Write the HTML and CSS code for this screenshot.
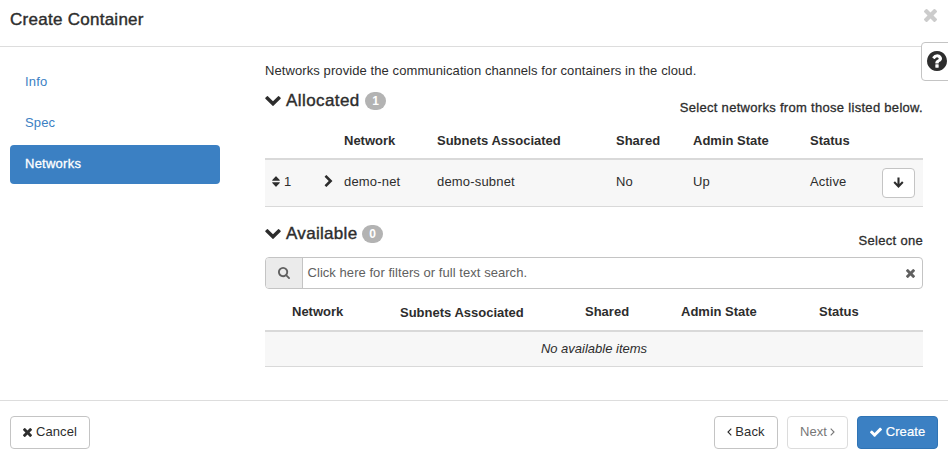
FILE: index.html
```html
<!DOCTYPE html>
<html lang="en">
<head>
<meta charset="utf-8">
<title>Create Container</title>
<link rel="stylesheet" href="styles.css">
</head>
<body>
<svg class="sprite" aria-hidden="true">
  <symbol id="times" viewBox="302 366 1188 1188"><path d="M1490 1322q0 40-28 68l-136 136q-28 28-68 28t-68-28l-294-294-294 294q-28 28-68 28t-68-28l-136-136q-28-28-28-68t28-68l294-294-294-294q-28-28-28-68t28-68l136-136q28-28 68-28t68 28l294 294 294-294q28-28 68-28t68 28l136 136q28 28 28 68t-28 68l-294 294 294 294q28 28 28 68z"/></symbol>
  <symbol id="check" viewBox="121 270 1550 1252"><path d="M1671 566q0 40-28 68l-724 724-136 136q-28 28-68 28t-68-28l-136-136-362-362q-28-28-28-68t28-68l136-136q28-28 68-28t68 28l294 295 656-657q28-28 68-28t68 28l136 136q28 28 28 68z"/></symbol>
  <symbol id="search" viewBox="64 128 1664 1664"><path d="M1216 832q0-185-131.500-316.500t-316.500-131.500-316.500 131.500-131.500 316.500 131.500 316.500 316.500 131.500 316.500-131.500 131.500-316.500zm512 832q0 52-38 90t-90 38q-54 0-90-38l-343-342q-179 124-399 124-143 0-273.500-55.500t-225-150-150-225-55.500-273.500 55.500-273.500 150-225 225-150 273.500-55.500 273.500 55.500 225 150 150 225 55.500 273.500q0 220-124 399l343 343q37 37 37 90z"/></symbol>
  <symbol id="question" viewBox="128 128 1536 1536"><path d="M1024 1376v-192q0-14-9-23t-23-9h-192q-14 0-23 9t-9 23v192q0 14 9 23t23 9h192q14 0 23-9t9-23zm256-672q0-88-55.500-163t-138.500-116-170-41q-243 0-371 213-15 24 8 42l132 100q7 6 19 6 16 0 25-12 53-68 86-92 34-24 86-24 48 0 85.500 26t37.500 59q0 38-20 61t-68 45q-63 28-115.500 86.500t-52.500 125.500v36q0 14 9 23t23 9h192q14 0 23-9t9-23q0-19 21.500-49.500t54.500-49.500q32-18 49-28.500t46-35 44.500-48 28-60.500 12.500-81zm384 192q0 209-103 385.500t-279.500 279.500-385.500 103-385.500-103-279.500-279.500-103-385.500 103-385.500 279.500-279.500 385.500-103 385.500 103 279.500 279.500 103 385.500z"/></symbol>
  <symbol id="down" viewBox="90 533 1612 1035"><path d="M1683 808l-742 741q-19 19-45 19t-45-19l-742-741q-19-19-19-45.500t19-45.500l166-165q19-19 45-19t45 19l531 531 531-531q19-19 45-19t45 19l166 165q19 19 19 45.500t-19 45.500z"/></symbol>
  <symbol id="right" viewBox="346 26 1036 1612"><path d="M1363 877l-742 742q-19 19-45 19t-45-19l-166-166q-19-19-19-45t19-45l531-531-531-531q-19-19-19-45t19-45l166-166q19-19 45-19t45 19l742 742q19 19 19 45t-19 45z"/></symbol>
  <symbol id="sort" viewBox="0 0 8 11"><path d="M.6 4.700Q-.2 4.500.3 3.900L3.600.4Q4 0 4.400.4L7.700 3.900Q8.200 4.500 7.400 4.700ZM.6 6.300Q-.2 6.500.3 7.100L3.600 10.600Q4 11 4.400 10.600L7.700 7.100Q8.200 6.500 7.400 6.300Z"/></symbol>
  <symbol id="arrow" viewBox="0 0 11 11"><path d="M5.500.5V9M1.200 5.100 5.500 9.400 9.800 5.100" fill="none" stroke="currentColor" stroke-width="2.100"/></symbol>
  <symbol id="angle-left" viewBox="0 0 5 8"><path d="M4.300.7 1 4 4.300 7.300" fill="none" stroke="currentColor" stroke-width="1.100"/></symbol>
  <symbol id="angle-right" viewBox="0 0 5 8"><path d="M.7.7 4 4 .7 7.300" fill="none" stroke="currentColor" stroke-width="1.100"/></symbol>
</svg>
<div class="modal">
  <header class="modal-header">
    <h1 class="title">Create Container</h1>
    <svg class="close"><use href="#times"/></svg>
  </header>
  <div class="modal-body">
    <nav class="steps">
      <a class="step">Info</a>
      <a class="step">Spec</a>
      <a class="step active">Networks</a>
    </nav>
    <main class="content">
      <p class="intro">Networks provide the communication channels for containers in the cloud.</p>
      <section class="allocated">
        <div class="section-head">
          <h2 class="section-title"><svg class="chevron"><use href="#down"/></svg><span class="name">Allocated</span><span class="badge">1</span></h2>
          <span class="hint">Select networks from those listed below.</span>
        </div>
        <table class="table">
          <colgroup><col class="a1"><col class="a2"><col class="a3"><col class="a4"><col class="a5"><col class="a6"><col class="a7"><col class="a8"></colgroup>
          <thead><tr><th></th><th></th><th>Network</th><th>Subnets Associated</th><th>Shared</th><th>Admin State</th><th>Status</th><th></th></tr></thead>
          <tbody><tr>
            <td><span class="order"><svg class="sort"><use href="#sort"/></svg>1</span></td>
            <td><svg class="expand"><use href="#right"/></svg></td>
            <td>demo-net</td><td>demo-subnet</td><td>No</td><td>Up</td><td>Active</td>
            <td><button class="btn btn-move"><svg class="arrow"><use href="#arrow"/></svg></button></td>
          </tr></tbody>
        </table>
      </section>
      <section class="available">
        <div class="section-head">
          <h2 class="section-title"><svg class="chevron"><use href="#down"/></svg><span class="name">Available</span><span class="badge">0</span></h2>
          <span class="hint">Select one</span>
        </div>
        <div class="search">
          <span class="search-addon"><svg class="glass"><use href="#search"/></svg></span>
          <span class="search-text">Click here for filters or full text search.</span>
          <svg class="clear"><use href="#times"/></svg>
        </div>
        <table class="table">
          <colgroup><col class="b1"><col class="b2"><col class="b3"><col class="b4"><col class="b5"><col class="b6"></colgroup>
          <thead><tr><th></th><th>Network</th><th class="low">Subnets Associated</th><th>Shared</th><th>Admin State</th><th>Status</th></tr></thead>
          <tbody><tr><td class="empty" colspan="6">No available items</td></tr></tbody>
        </table>
      </section>
    </main>
  </div>
  <footer class="modal-footer">
    <button class="btn cancel"><svg class="x"><use href="#times"/></svg>Cancel</button>
    <div class="actions">
      <button class="btn back"><svg class="angle"><use href="#angle-left"/></svg>Back</button>
      <button class="btn next" disabled>Next<svg class="angle"><use href="#angle-right"/></svg></button>
      <button class="btn create"><svg class="tick"><use href="#check"/></svg>Create</button>
    </div>
  </footer>
  <div class="help"><svg class="help-icon"><use href="#question"/></svg></div>
</div>
</body>
</html>
```
FILE: styles.css
```css
* { box-sizing: border-box; }
body {
  margin: 0;
  background: #fff;
  color: #2d2d2d;
  font: 13px/18px "Liberation Sans", Arial, sans-serif;
}
.sprite { position: absolute; width: 0; height: 0; }
svg { display: block; flex: none; fill: currentColor; }
.modal {
  position: relative;
  display: flex;
  flex-direction: column;
  width: 948px;
  height: 457px;
  overflow: hidden;
}
.modal-header {
  display: flex;
  justify-content: space-between;
  height: 47px;
  padding: 9px 11px 0 10px;
  border-bottom: 1px solid #ddd;
}
h1, h2, p { margin: 0; }
.title {
  padding-top: 1px;
  font-size: 17px;
  line-height: 20px;
  font-weight: 400;
  letter-spacing: .27px;
  -webkit-text-stroke: .4px;
}
.close { width: 13px; height: 13px; color: #ccc; }
.modal-body { display: flex; flex: 1; }
.steps {
  width: 210px;
  margin: 16px 45px 0 10px;
  display: flex;
  flex-direction: column;
  gap: 2px;
}
.step {
  height: 39px;
  padding: 10px 15px;
  border-radius: 4px;
  color: #3b80c3;
  letter-spacing: .15px;
}
.step.active { background: #3b80c3; color: #fff; letter-spacing: .25px; -webkit-text-stroke: .3px; }
.content { width: 658px; padding-top: 15px; }
.intro { letter-spacing: .09px; }
.section-head { display: flex; justify-content: space-between; height: 43px; }
.section-title {
  display: flex;
  align-items: flex-start;
  padding-top: 11px;
  font-size: 17px;
  line-height: 20px;
  font-weight: 400;
}
.section-title .name {
  width: 74px;
  letter-spacing: .42px;
  -webkit-text-stroke: .4px;
  white-space: nowrap;
}
.available .name { width: 71px; letter-spacing: .3px; }
.chevron { width: 16px; height: 10px; margin: 5px 5px 0 0; }
.badge {
  width: 21px;
  height: 18px;
  margin: 1px 0 0 5px;
  border-radius: 9px;
  background: #b3b3b3;
  color: #fff;
  font-size: 12px;
  line-height: 18px;
  font-weight: 700;
  text-align: center;
}
.hint { padding-top: 19px; letter-spacing: .3px; -webkit-text-stroke: .3px; white-space: nowrap; }
.table { width: 658px; border-collapse: separate; border-spacing: 0; table-layout: fixed; }
th, td { padding: 0 8px; text-align: left; vertical-align: top; white-space: nowrap; }
th { height: 37px; padding-top: 9px; border-bottom: 2px solid #d9d9d9; }
td {
  height: 47px;
  padding-top: 13px;
  background: #f7f7f7;
  border-bottom: 1px solid #d9d9d9;
  letter-spacing: .18px;
}
.a1 { width: 51px; } .a2 { width: 20px; } .a3 { width: 93px; } .a4 { width: 179px; }
.a5 { width: 77px; } .a6 { width: 117px; } .a7 { width: 72px; } .a8 { width: 49px; }
.order { display: flex; align-items: center; gap: 4px; margin-left: -1px; }
.sort { width: 8px; height: 11px; margin-top: -1px; }
.expand { width: 9px; height: 12px; margin-top: 2px; }
.btn {
  display: flex;
  align-items: center;
  justify-content: center;
  height: 33px;
  padding: 0 0 1px;
  border: 1px solid #c4c4c4;
  border-radius: 4px;
  background: #fff;
  color: #2d2d2d;
  font: inherit;
  letter-spacing: .12px;
}
.btn-move { width: 33px; height: 30px; margin-top: -5px; padding: 0 0 2px; }
.arrow { width: 11px; height: 11px; }
.available { padding-top: 6px; }
.search {
  display: flex;
  align-items: center;
  height: 32px;
  margin-top: 1px;
  border: 1px solid #c4c4c4;
  border-radius: 4px;
  color: #606060;
}
.search-addon {
  display: flex;
  align-items: center;
  justify-content: center;
  width: 37px;
  height: 30px;
  border-right: 1px solid #c4c4c4;
  border-radius: 3px 0 0 3px;
  background: #ebebeb;
}
.glass { width: 12px; height: 12px; }
.search-text { flex: 1; padding-left: 4.5px; letter-spacing: .05px; }
.clear { width: 9px; height: 9px; margin-right: 7px; }
.available th { height: 43px; padding-top: 14px; }
.available th.low { padding-top: 15px; }
.b1 { width: 19px; } .b2 { width: 108px; } .b3 { width: 185px; }
.b4 { width: 96px; } .b5 { width: 138px; } .b6 { width: 112px; }
td.empty { height: 35px; padding-top: 8px; text-align: center; font-style: italic; letter-spacing: 0; }
.modal-footer {
  display: flex;
  justify-content: space-between;
  height: 57px;
  padding: 15px 10px 0;
  border-top: 1px solid #ddd;
}
.actions { display: flex; gap: 9px; }
.cancel { width: 80px; gap: 4px; }
.x { width: 9px; height: 9px; }
.angle { width: 5px; height: 8px; }
.back { width: 64px; gap: 3px; }
.next { width: 61px; gap: 3px; color: #777; border-color: #dcdcdc; }
.create { width: 81px; gap: 4px; background: #3b80c3; border-color: #2f74b5; color: #fff; -webkit-text-stroke: .2px; }
.tick { width: 12px; height: 10px; }
.help {
  position: absolute;
  top: 42px;
  right: -5px;
  width: 32px;
  height: 39px;
  padding: 8px 0 0 5px;
  border: 1px solid #c4c4c4;
  border-radius: 4px;
  background: #fff;
}
.help-icon { width: 20px; height: 20px; }
```
